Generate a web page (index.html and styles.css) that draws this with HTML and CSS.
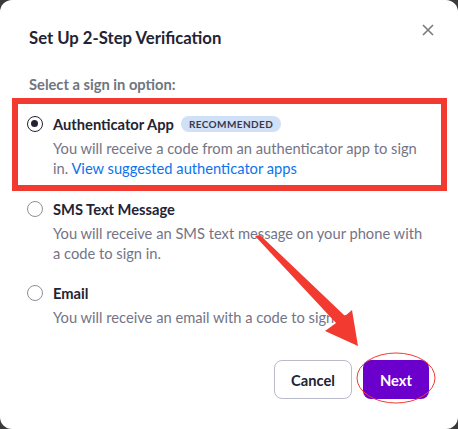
FILE: index.html
```html
<!DOCTYPE html>
<html lang="en">
<head>
    <meta charset="UTF-8">
    <meta name="viewport" content="width=device-width, initial-scale=1.0">
    <title>Set Up 2-Step Verification</title>
    <link rel="stylesheet" href="styles.css">
</head>
<body>
    <div class="modal">
        <div class="modal-header">
            <h2>Set Up 2-Step Verification</h2>
            <button class="close-btn" aria-label="Close">
                <svg width="12" height="12" viewBox="0 0 12 12">
                    <path d="M1 1L11 11M11 1L1 11" stroke="#7a7a7a" stroke-width="1.6" fill="none"/>
                </svg>
            </button>
        </div>

        <div class="modal-body">
            <p class="label">Select a sign in option:</p>

            <div class="options">
                <label class="option highlight">
                    <span class="radio checked"></span>
                    <span class="option-text">
                        <span class="option-title">Authenticator App <span class="badge">RECOMMENDED</span></span>
                        <span class="option-desc">You will receive a code from an authenticator app to sign in. <a href="#">View suggested authenticator apps</a></span>
                    </span>
                </label>

                <label class="option">
                    <span class="radio"></span>
                    <span class="option-text">
                        <span class="option-title">SMS Text Message</span>
                        <span class="option-desc">You will receive an SMS text message on your phone with a code to sign in.</span>
                    </span>
                </label>

                <label class="option">
                    <span class="radio"></span>
                    <span class="option-text">
                        <span class="option-title">Email</span>
                        <span class="option-desc">You will receive an email with a code to sign in.</span>
                    </span>
                </label>
            </div>
        </div>

        <div class="modal-footer">
            <button class="btn btn-cancel">Cancel</button>
            <button class="btn btn-next">Next</button>
        </div>

        <!-- annotation arrow and circle -->
        <svg class="annotation" width="458" height="429" viewBox="0 0 458 429">
            <polygon points="255,236 260,235 345,316 352,310 358,346 325,331 336,323" fill="#f23a30"/>
            <ellipse cx="396" cy="378" rx="39" ry="25" fill="none" stroke="#f23a30" stroke-width="1"/>
        </svg>
    </div>
</body>
</html>
```

FILE: styles.css
```css
body {
    margin: 0;
    padding: 0;
    background-color: #3a3a3a;
    font-family: Lato, "Open Sans", sans-serif;
}

.modal {
    position: relative;
    width: 458px;
    height: 429px;
    background-color: #fff;
    border-radius: 12px;
    display: flex;
    flex-direction: column;
    box-sizing: border-box;
}

.modal-header {
    display: flex;
    justify-content: space-between;
    align-items: flex-start;
    padding: 24px 24px 0 29px;
}

.modal-header h2 {
    margin: 0;
    font-size: 16.7px;
    line-height: 28px;
    font-weight: 700;
    color: #232333;
}

.close-btn {
    background: none;
    border: none;
    padding: 0;
    width: 12px;
    height: 12px;
    cursor: pointer;
    line-height: 0;
}

.modal-body {
    padding: 0 11px 0 12px;
}

.label {
    margin: 22px 0 0 17px;
    font-size: 14.7px;
    line-height: 20px;
    font-weight: 700;
    color: #6e7680;
}

.options {
    margin-top: 4px;
    display: flex;
    flex-direction: column;
}

.option {
    display: flex;
    gap: 10px;
    padding: 0 0 0 15px;
    margin-top: 20px;
    cursor: pointer;
}

.option.highlight {
    margin-top: 0;
    margin-bottom: -12px;
    border: 6px solid #f23a30;
    padding: 10px 0 7px 9px;
}

.radio {
    flex: none;
    width: 16px;
    height: 16px;
    margin-top: 2px;
    border: 1.5px solid #8f8f99;
    border-radius: 50%;
    box-sizing: border-box;
    position: relative;
}

.radio.checked {
    border-color: #232333;
}

.radio.checked::after {
    content: "";
    position: absolute;
    left: 3px;
    top: 3px;
    width: 7px;
    height: 7px;
    border-radius: 50%;
    background-color: #232333;
}

.option-text {
    width: 372px;
    display: flex;
    flex-direction: column;
    gap: 4px;
}

.option-title {
    display: flex;
    align-items: center;
    font-size: 14.7px;
    line-height: 20px;
    font-weight: 700;
    color: #232333;
}

.badge {
    margin-left: 7px;
    padding: 0 8px;
    height: 16px;
    line-height: 16px;
    border-radius: 8px;
    background-color: #cfe0f7;
    color: #39394d;
    font-size: 10px;
    letter-spacing: 0.4px;
    font-weight: 700;
}

.option-desc {
    font-size: 14.7px;
    line-height: 20px;
    color: #747487;
}

.option-desc a {
    color: #0e72ed;
    text-decoration: none;
}

.modal-footer {
    margin-top: auto;
    display: flex;
    justify-content: flex-end;
    gap: 11px;
    padding: 0 29px 30px 0;
}

.btn {
    height: 39px;
    border-radius: 8px;
    font-family: Lato, "Open Sans", sans-serif;
    font-size: 14.7px;
    font-weight: 700;
    cursor: pointer;
}

.btn-cancel {
    width: 78px;
    background-color: #fff;
    border: 1px solid #babacc;
    color: #232333;
}

.btn-next {
    width: 66px;
    background-color: #6b00cc;
    border: none;
    color: #fff;
}

.annotation {
    position: absolute;
    left: 0;
    top: 0;
    pointer-events: none;
}
```
